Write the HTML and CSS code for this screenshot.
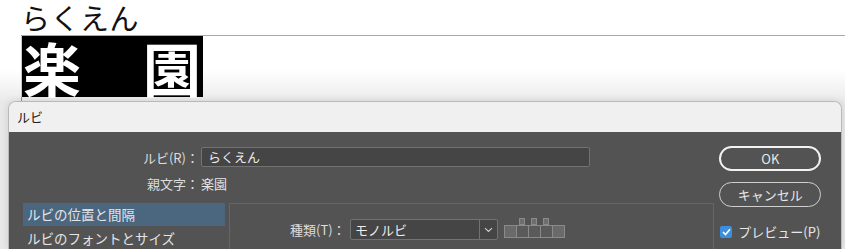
FILE: index.html
```html
<!DOCTYPE html>
<html lang="ja">
<head>
  <meta charset="UTF-8" />
  <title>ルビ</title>
  <link rel="stylesheet" href="styles.css">
</head>
<body>
  <div class="page">
    <div class="doc">
      <div class="ruby-top">らくえん</div>
      <div class="base-line">
        <div class="base-box">
          <span>楽</span>
          <span>園</span>
        </div>
      </div>
    </div>

    <div class="dialog">
      <div class="title-bar">ルビ</div>
      <div class="dialog-body">
        <div class="main">
          <div class="form-row">
            <label class="form-label">ルビ(R)：</label>
            <div class="text-input">らくえん</div>
          </div>
          <div class="form-row row-base">
            <span class="form-label">親文字：</span>
            <span class="base-text">楽園</span>
          </div>
          <div class="panels">
            <ul class="side-list">
              <li class="active">ルビの位置と間隔</li>
              <li>ルビのフォントとサイズ</li>
            </ul>
            <div class="panel">
              <div class="panel-row">
                <span class="panel-label">種類(T)：</span>
                <div class="select">
                  <span class="select-value">モノルビ</span>
                  <span class="select-arrow">
                    <svg width="9" height="6" viewBox="0 0 9 6"><path d="M1 1.2 L4.5 4.5 L8 1.2" fill="none" stroke="#d0d0d0" stroke-width="1.1"/></svg>
                  </span>
                </div>
                <svg class="mono-icon" width="62" height="22" viewBox="0 0 62 22">
                  <rect x="15.5" y="1.5" width="5" height="6" fill="#6e6e6e" stroke="#8a8a8a"/>
                  <rect x="27.5" y="1.5" width="5" height="6" fill="#6e6e6e" stroke="#8a8a8a"/>
                  <rect x="39.5" y="1.5" width="5" height="6" fill="#6e6e6e" stroke="#8a8a8a"/>
                  <rect x="0.5" y="8.5" width="12" height="12" fill="#6a6a6a" stroke="#8a8a8a"/>
                  <rect x="12.5" y="8.5" width="12" height="12" fill="#5a5a5a" stroke="#8a8a8a"/>
                  <rect x="24.5" y="8.5" width="12" height="12" fill="#5a5a5a" stroke="#8a8a8a"/>
                  <rect x="36.5" y="8.5" width="12" height="12" fill="#5a5a5a" stroke="#8a8a8a"/>
                  <rect x="48.5" y="8.5" width="12" height="12" fill="#6a6a6a" stroke="#8a8a8a"/>
                </svg>
              </div>
            </div>
          </div>
        </div>

        <div class="side">
          <button class="btn btn-ok">OK</button>
          <button class="btn">キャンセル</button>
          <div class="check-row">
            <span class="checkbox">
              <svg width="9" height="8" viewBox="0 0 9 8"><path d="M1 4 L3.5 6.5 L8 1.2" fill="none" stroke="#fff" stroke-width="1.6"/></svg>
            </span>
            <span class="check-label">プレビュー(P)</span>
          </div>
        </div>
      </div>
    </div>
  </div>
</body>
</html>
```

FILE: styles.css
```css
* { margin: 0; padding: 0; box-sizing: border-box; }
body {
  font-family: "Noto Sans CJK JP", "Noto Sans", sans-serif;
  background: #e9e9e9;
  width: 845px;
  height: 249px;
  overflow: hidden;
}

.page {
  width: 845px;
  height: 249px;
}

/* 文書側 */
.doc {
  height: 101px;
  background: linear-gradient(to bottom, #ffffff 0, #ffffff 70px, #ebebeb 101px);
}

.ruby-top {
  padding-left: 21px;
  height: 35px;
  font-size: 29px;
  line-height: 35px;
  letter-spacing: 0.5px;
  color: #111;
}

.base-line {
  margin-left: 21px;
  border-top: 1px solid #c893c9;
  height: 66px;
  border-left: 1px solid #8a7fd0;
}

.base-box {
  width: 182px;
  height: 61px;
  background: #000;
  color: #fff;
  display: flex;
  justify-content: space-between;
  align-items: center;
  padding: 0 2px 0 1px;
  border-left: 1px solid #d8cf7a;
  margin-left: -1px;
}

.base-box span {
  font-size: 58px;
  font-weight: bold;
  line-height: 58px;
}

/* ダイアログ */
.dialog {
  margin-left: 8px;
  width: 834px;
  height: 148px;
  border: 1px solid #b9b9b9;
  border-bottom: none;
  border-radius: 8px 8px 0 0;
  overflow: hidden;
  box-shadow: 0 0 8px rgba(0, 0, 0, 0.12);
}

.title-bar {
  height: 30px;
  background: #f0f0f0;
  color: #222;
  font-size: 13px;
  line-height: 30px;
  padding-left: 8px;
}

.dialog-body {
  background: #535353;
  height: 117px;
  display: flex;
  color: #dcdcdc;
  font-size: 13px;
}

.main {
  width: 707px;
  padding-top: 15px;
}

.form-row {
  display: flex;
  align-items: center;
  height: 20px;
}

.form-label {
  width: 192px;
  text-align: right;
  padding-right: 2px;
}

.text-input {
  width: 389px;
  height: 20px;
  background: #454545;
  border: 1px solid #727272;
  border-radius: 2px;
  color: #ececec;
  padding-left: 6px;
  line-height: 18px;
}

.row-base {
  margin-top: 6px;
}

.base-text {
  color: #e6e6e6;
}

.panels {
  display: flex;
  margin-top: 10px;
  margin-left: 14px;
  gap: 4px;
}

.side-list {
  list-style: none;
  width: 202px;
}

.side-list li {
  height: 23px;
  line-height: 23px;
  padding-left: 4px;
  font-size: 13.5px;
  color: #e4e4e4;
  margin-bottom: 1px;
}

.side-list li.active {
  background: #4b6780;
}

.panel {
  flex: 1;
  height: 60px;
  border-top: 1px solid #666;
  border-left: 1px solid #666;
  border-right: 1px solid #666;
}

.panel-row {
  display: flex;
  align-items: center;
  padding-left: 60px;
  margin-top: 15px;
}

.panel-label {
  width: 60px;
}

.select {
  display: flex;
  width: 148px;
  height: 21px;
  background: #454545;
  border: 1px solid #727272;
  border-radius: 2px;
}

.select-value {
  flex: 1;
  padding-left: 4px;
  line-height: 19px;
  color: #ececec;
}

.select-arrow {
  width: 18px;
  border-left: 1px solid #727272;
  display: flex;
  align-items: center;
  justify-content: center;
}

.mono-icon {
  margin-left: 6px;
  margin-top: -3px;
}

/* 右側ボタン */
.side {
  width: 122px;
  margin-left: 5px;
  padding-top: 14px;
  display: flex;
  flex-direction: column;
}

.btn {
  height: 25px;
  width: 102px;
  border-radius: 13px;
  border: 1px solid #cfcfcf;
  background: transparent;
  color: #e8e8e8;
  font-family: inherit;
  font-size: 13px;
  margin-bottom: 11px;
}

.btn-ok {
  border: 2px solid #f2f2f2;
}

.check-row {
  display: flex;
  align-items: center;
  gap: 6px;
  margin-top: 4px;
  padding-left: 1px;
  color: #e8e8e8;
  font-size: 13px;
  white-space: nowrap;
}

.checkbox {
  width: 12px;
  height: 12px;
  border-radius: 2px;
  background: #3b8ee0;
  display: flex;
  align-items: center;
  justify-content: center;
}
```
